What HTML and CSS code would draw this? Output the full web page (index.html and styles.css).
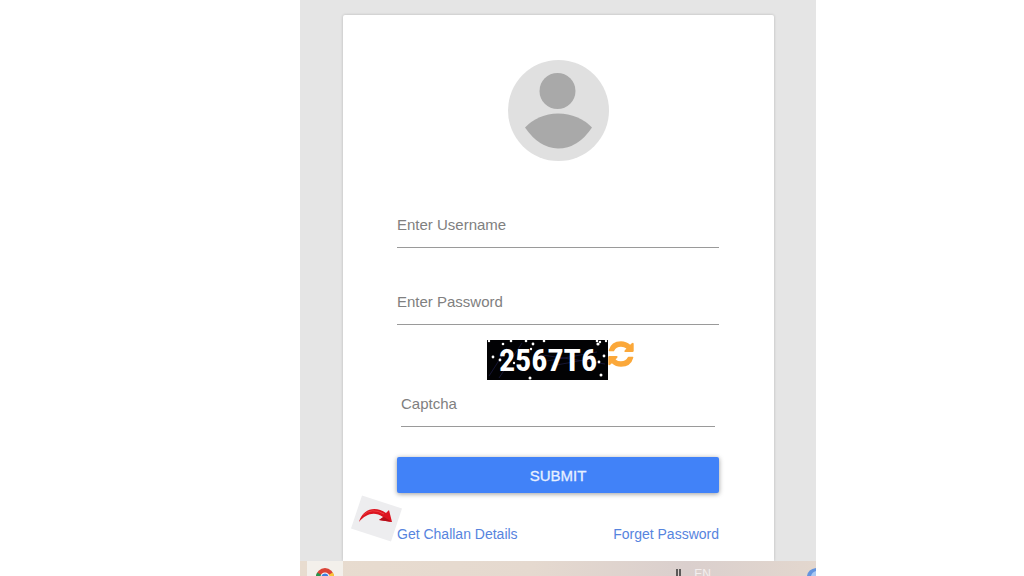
FILE: index.html
```html
<!DOCTYPE html>
<html lang="en">
<head>
<meta charset="utf-8">
<meta name="viewport" content="width=device-width, initial-scale=1">
<title>Login</title>
<link rel="stylesheet" href="styles.css">
</head>
<body class="page">
<div class="stage">
  <main class="backdrop">
    <form class="card">
      <svg class="avatar" viewBox="0 0 101 101" role="img" aria-label="User">
        <circle cx="50.5" cy="50.5" r="50.5" fill="#e0e0e0"/>
        <circle cx="49.500" cy="31" r="18" fill="#a9a9a9"/>
        <path d="M17 67.500Q30 54 50 53.500Q71 54 84 67.500Q70 88.500 50 88.500Q31 88 17 67.500Z" fill="#a9a9a9"/>
      </svg>
      <input class="field" type="text" placeholder="Enter Username" aria-label="Enter Username">
      <input class="field field-password" type="password" placeholder="Enter Password" aria-label="Enter Password">
      <div class="captcha">
        <svg class="captcha-image" viewBox="0 0 121 40" role="img" aria-label="Captcha code">
          <rect width="121" height="40" fill="#020204"/>
          <path d="M2 36L20 8M12 38L35 3M55 15L118 24M60 21L110 12M64 26L108 18" stroke="#161635" fill="none"/>
          <text class="captcha-code" x="61" y="31" text-anchor="middle">2567T6</text>
          <g fill="#fff">
            <circle cx="2" cy="1" r="1.200"/><circle cx="16" cy="4" r="1.300"/><circle cx="24" cy="1" r="1.300"/><circle cx="6" cy="17" r="1.400"/><circle cx="13" cy="20" r="1.400"/><circle cx="39" cy="1" r="1.300"/><circle cx="46" cy="4" r="1.400"/><circle cx="44" cy="9" r="1.200"/><circle cx="57" cy="1" r="1.300"/><circle cx="110" cy="1" r="1.300"/><circle cx="111" cy="4" r="1.600"/><circle cx="113" cy="2" r="1.200"/><circle cx="117" cy="16" r="1.400"/><circle cx="112" cy="22" r="1.400"/><circle cx="114" cy="35" r="1.500"/><circle cx="43" cy="38" r="1.500"/><circle cx="119" cy="1" r="1.200"/><circle cx="27" cy="23" r="1.200"/>
          </g>
        </svg>
        <button class="refresh" type="button" aria-label="Refresh captcha">
          <svg class="refresh-icon" viewBox="0 0 512 512" fill="#fba83a">
            <path d="M363 150Q320 112 256 112Q160 112 122 190Q118 200 108 200H24Q10 200 14 184Q62 6 256 6Q362 6 436 76L468 44Q504 22 506 60V196Q504 218 482 218H346Q308 214 332 181Z"/>
            <path d="M149 362Q192 400 256 400Q352 400 390 322Q394 312 404 312H488Q502 312 498 328Q450 506 256 506Q150 506 76 436L44 468Q8 490 6 452V316Q8 294 30 294H166Q204 298 180 331Z"/>
          </svg>
        </button>
      </div>
      <input class="field field-captcha" type="text" placeholder="Captcha" aria-label="Captcha">
      <button class="submit" type="submit">SUBMIT</button>
      <nav class="links">
        <a class="link" href="#challan">Get Challan Details</a>
        <a class="link" href="#forget">Forget Password</a>
        <svg class="pointer" viewBox="0 0 51 47" aria-hidden="true">
          <path d="M11 0.500L51 13.500L40 46.500L0 33.500Z" fill="#ededef"/>
          <path d="M8 27C12 13 25 11 35 18L38 15L41 27L28 25L32 22C23 16 15 19 8 27Z" fill="#dc1420"/>
          <path d="M12 20Q21 12 33 19" stroke="#ee3d40" fill="none"/>
          <path d="M28 25L33 22L41 27Z" fill="#b50e19"/>
        </svg>
      </nav>
    </form>
  </main>
  <footer class="taskbar">
    <span class="browser">
      <svg class="browser-icon" viewBox="0 0 18 18" aria-hidden="true">
        <circle cx="9" cy="9" r="9" fill="#db4437"/>
        <path d="M9 9L1.200 4.500A9 9 0 0 0 9 18Z" fill="#24964f"/>
        <path d="M9 9L16.800 4.500A9 9 0 0 1 9 18Z" fill="#f9c638"/>
        <circle cx="9" cy="9" r="4.500" fill="#fff"/><circle cx="9" cy="9" r="3.500" fill="#3f7fe0"/>
      </svg>
    </span>
    <svg class="signal" viewBox="0 0 6 8" aria-hidden="true"><path d="M1 0V8M4 0V8" stroke="#333" stroke-width="1.500"/></svg>
    <span class="language">EN</span>
    <svg class="tray" viewBox="0 0 9 8" aria-hidden="true"><path d="M0 8Q1 1 9 0V8Z" fill="#6494df"/><path d="M4 8Q5 4 9 3V8Z" fill="#abc9f2"/></svg>
  </footer>
</div>
</body>
</html>
```
FILE: styles.css
```css
* { box-sizing: border-box; }
.page {
  display: grid;
  grid-template-columns: 300fr 516fr 208fr;
  min-height: 100vh;
  margin: 0;
  background: #fff;
  font-family: "Liberation Sans", Arial, sans-serif;
}
.stage {
  grid-column: 2;
  display: flex;
  flex-direction: column;
  height: 100vh;
  min-width: 0;
}
.backdrop {
  flex: 1;
  min-height: 0;
  padding: 15px 42px 0 43px;
  overflow: hidden;
  background: #e5e5e5;
}
.card {
  display: flex;
  flex-direction: column;
  align-items: stretch;
  min-height: 100%;
  padding: 45px 55px 16px 54px;
  border-radius: 2px 2px 0 0;
  background: #fff;
  box-shadow: 0 0 3px rgba(0, 0, 0, 0.2);
}
.avatar {
  align-self: center;
  width: 101px;
  height: 101px;
  margin-bottom: 41px;
}
.field {
  width: 100%;
  height: 46px;
  padding: 0;
  border: 0;
  border-bottom: 1px solid #9a9a9a;
  border-radius: 0;
  background: transparent;
  color: #444;
  font: 15px "Liberation Sans", Arial, sans-serif;
}
.field::placeholder { color: #808080; opacity: 1; }
.field-password { margin-top: 31px; }
.field-captcha {
  align-self: center;
  width: calc(100% - 8px);
}
.captcha {
  display: flex;
  justify-content: center;
  align-items: flex-start;
  margin: 15px 0 1px;
  padding-left: 4px;
}
.captcha-image { width: 121px; height: 40px; }
.captcha-code {
  fill: #fff;
  font: bold 32px "Liberation Sans Narrow", "Roboto Condensed", "Open Sans Condensed", Roboto, sans-serif;
}
.refresh {
  width: 26px;
  height: 28px;
  padding: 0;
  border: 0;
  background: none;
  cursor: pointer;
}
.refresh-icon { display: block; width: 26px; height: 26px; }
.submit {
  height: 36px;
  margin-top: 30px;
  padding: 0;
  border: 0;
  border-radius: 2px;
  background: #4182f8;
  box-shadow: 0 1px 5px rgba(0, 0, 0, 0.4);
  color: #e7f0ff;
  font: 15px "Liberation Sans", Arial, sans-serif;
  -webkit-text-stroke: 0.3px #e7f0ff;
  cursor: pointer;
}
.links {
  position: relative;
  display: flex;
  justify-content: space-between;
  margin-top: 31px;
}
.link {
  color: #5684de;
  font-size: 14px;
  line-height: 20px;
  text-decoration: none;
}
.pointer {
  position: absolute;
  top: -29px;
  left: -46px;
  width: 51px;
  height: 47px;
}
.taskbar {
  display: flex;
  align-items: flex-start;
  height: 15px;
  padding-left: 7px;
  overflow: hidden;
  background: linear-gradient(90deg, #e8dccf, #e5d9cf 45%, #dacfcd 75%, #e3d7ce);
}
.browser {
  display: flex;
  justify-content: center;
  width: 36px;
  height: 15px;
  padding-top: 7px;
  background: #f3f0eb;
}
.browser-icon { flex: none; width: 18px; height: 18px; }
.signal { width: 6px; height: 8px; margin: 8px 12px 0 auto; }
.language {
  color: #f4eeee;
  font-size: 12px;
  line-height: 14px;
  padding-top: 6px;
}
.tray { width: 9px; height: 8px; margin: 7px 0 0 96px; }
```
